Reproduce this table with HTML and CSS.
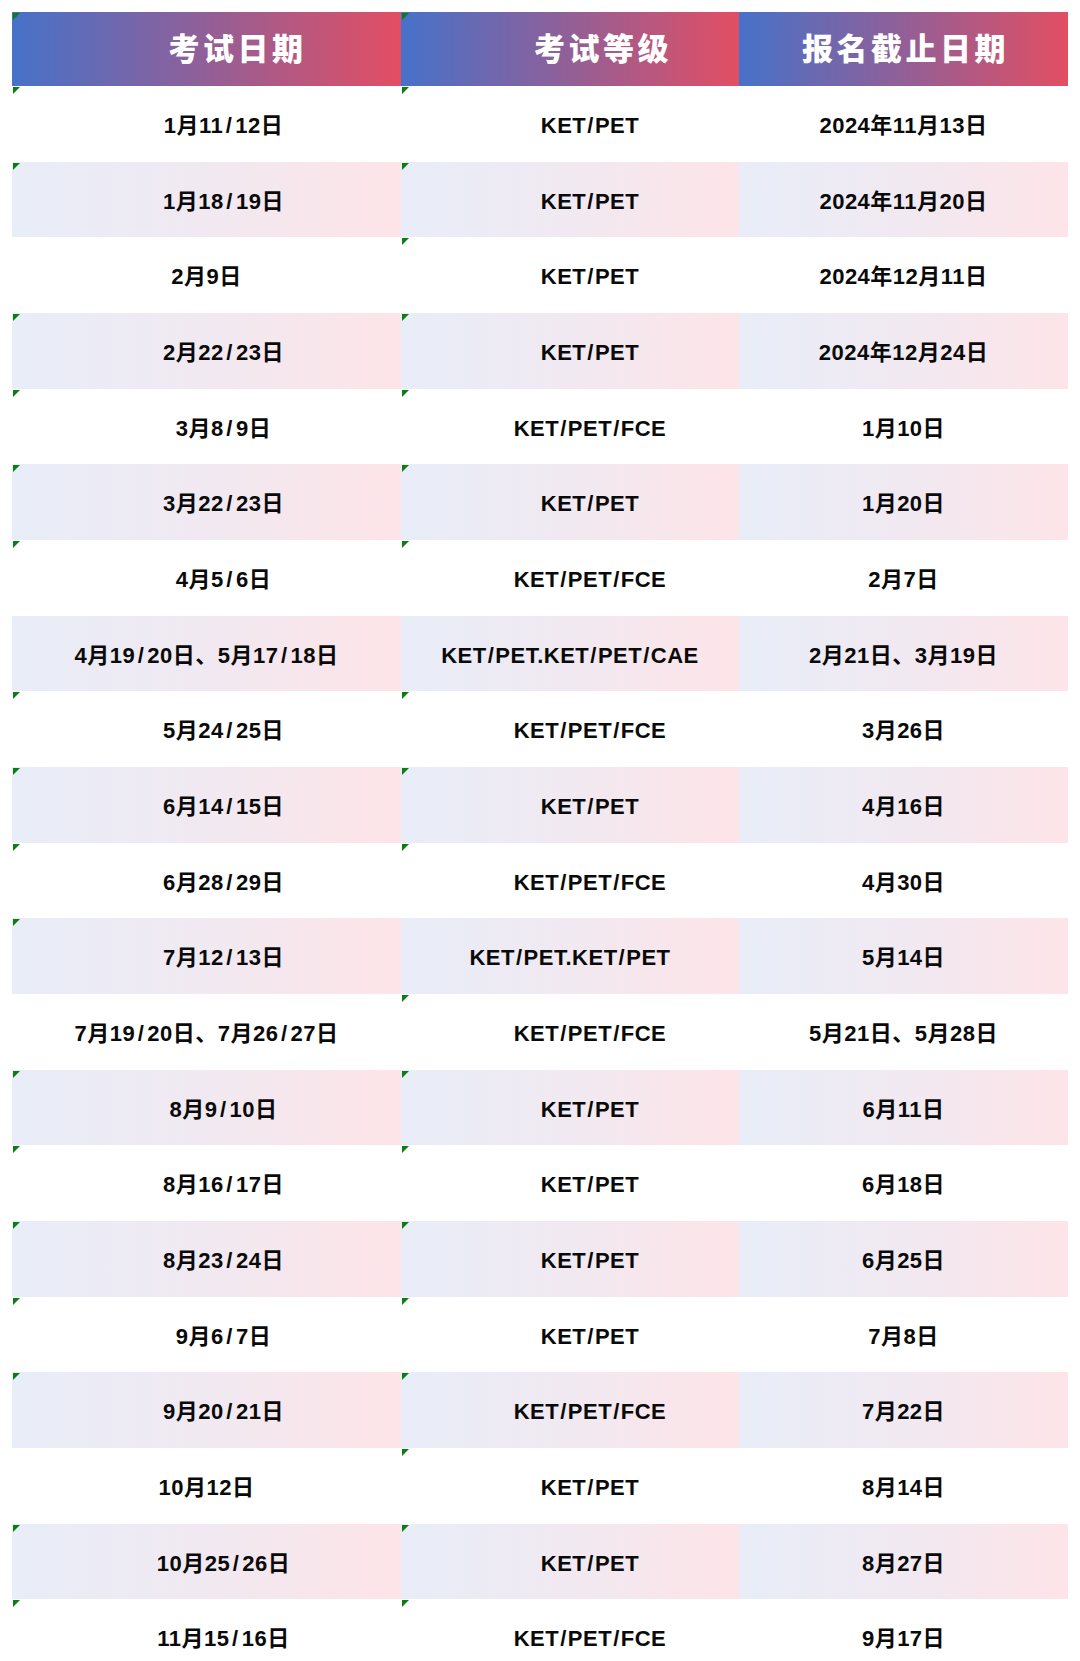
FILE: index.html
```html
<!DOCTYPE html>
<html lang="zh-CN">
<head>
<meta charset="utf-8">
<title>考试日期</title>
<link rel="stylesheet" href="styles.css">
</head>
<body>
<div class="sheet">
  <div class="row head">
    <div class="cell c1 mark">考试日期</div>
    <div class="cell c2 mark">考试等级</div>
    <div class="cell c3">报名截止日期</div>
  </div>
  <div class="row"><div class="cell c1 mark">1月11<span class="s">/</span>12日</div><div class="cell c2 mark">KET<span class="s">/</span>PET</div><div class="cell c3">2024年11月13日</div></div>
  <div class="row alt"><div class="cell c1 mark">1月18<span class="s">/</span>19日</div><div class="cell c2 mark">KET<span class="s">/</span>PET</div><div class="cell c3">2024年11月20日</div></div>
  <div class="row"><div class="cell c1">2月9日</div><div class="cell c2 mark">KET<span class="s">/</span>PET</div><div class="cell c3">2024年12月11日</div></div>
  <div class="row alt"><div class="cell c1 mark">2月22<span class="s">/</span>23日</div><div class="cell c2 mark">KET<span class="s">/</span>PET</div><div class="cell c3">2024年12月24日</div></div>
  <div class="row"><div class="cell c1 mark">3月8<span class="s">/</span>9日</div><div class="cell c2 mark">KET<span class="s">/</span>PET<span class="s">/</span>FCE</div><div class="cell c3">1月10日</div></div>
  <div class="row alt"><div class="cell c1 mark">3月22<span class="s">/</span>23日</div><div class="cell c2 mark">KET<span class="s">/</span>PET</div><div class="cell c3">1月20日</div></div>
  <div class="row"><div class="cell c1 mark">4月5<span class="s">/</span>6日</div><div class="cell c2 mark">KET<span class="s">/</span>PET<span class="s">/</span>FCE</div><div class="cell c3">2月7日</div></div>
  <div class="row alt"><div class="cell c1">4月19<span class="s">/</span>20日、5月17<span class="s">/</span>18日</div><div class="cell c2">KET<span class="s">/</span>PET.KET<span class="s">/</span>PET<span class="s">/</span>CAE</div><div class="cell c3">2月21日、3月19日</div></div>
  <div class="row"><div class="cell c1 mark">5月24<span class="s">/</span>25日</div><div class="cell c2 mark">KET<span class="s">/</span>PET<span class="s">/</span>FCE</div><div class="cell c3">3月26日</div></div>
  <div class="row alt"><div class="cell c1 mark">6月14<span class="s">/</span>15日</div><div class="cell c2 mark">KET<span class="s">/</span>PET</div><div class="cell c3">4月16日</div></div>
  <div class="row"><div class="cell c1 mark">6月28<span class="s">/</span>29日</div><div class="cell c2 mark">KET<span class="s">/</span>PET<span class="s">/</span>FCE</div><div class="cell c3">4月30日</div></div>
  <div class="row alt"><div class="cell c1 mark">7月12<span class="s">/</span>13日</div><div class="cell c2">KET<span class="s">/</span>PET.KET<span class="s">/</span>PET</div><div class="cell c3">5月14日</div></div>
  <div class="row"><div class="cell c1">7月19<span class="s">/</span>20日、7月26<span class="s">/</span>27日</div><div class="cell c2 mark">KET<span class="s">/</span>PET<span class="s">/</span>FCE</div><div class="cell c3">5月21日、5月28日</div></div>
  <div class="row alt"><div class="cell c1 mark">8月9<span class="s">/</span>10日</div><div class="cell c2 mark">KET<span class="s">/</span>PET</div><div class="cell c3">6月11日</div></div>
  <div class="row"><div class="cell c1 mark">8月16<span class="s">/</span>17日</div><div class="cell c2 mark">KET<span class="s">/</span>PET</div><div class="cell c3">6月18日</div></div>
  <div class="row alt"><div class="cell c1 mark">8月23<span class="s">/</span>24日</div><div class="cell c2 mark">KET<span class="s">/</span>PET</div><div class="cell c3">6月25日</div></div>
  <div class="row"><div class="cell c1 mark">9月6<span class="s">/</span>7日</div><div class="cell c2 mark">KET<span class="s">/</span>PET</div><div class="cell c3">7月8日</div></div>
  <div class="row alt"><div class="cell c1 mark">9月20<span class="s">/</span>21日</div><div class="cell c2 mark">KET<span class="s">/</span>PET<span class="s">/</span>FCE</div><div class="cell c3">7月22日</div></div>
  <div class="row"><div class="cell c1">10月12日</div><div class="cell c2 mark">KET<span class="s">/</span>PET</div><div class="cell c3">8月14日</div></div>
  <div class="row alt"><div class="cell c1 mark">10月25<span class="s">/</span>26日</div><div class="cell c2 mark">KET<span class="s">/</span>PET</div><div class="cell c3">8月27日</div></div>
  <div class="row"><div class="cell c1 mark">11月15<span class="s">/</span>16日</div><div class="cell c2 mark">KET<span class="s">/</span>PET<span class="s">/</span>FCE</div><div class="cell c3">9月17日</div></div>
</div>
</body>
</html>
```

FILE: styles.css
```css
html, body {
  margin: 0;
  padding: 0;
  background: #ffffff;
}

.sheet {
  padding: 12px 0 0 12px;
  font-family: "Liberation Sans", Arial, "Noto Sans CJK SC", sans-serif;
  color: #0a0a0a;
}

.row {
  display: grid;
  grid-template-columns: 389px 338px 329px;
  height: 75.68px;
}

.row.head {
  height: 74px;
}

.cell {
  position: relative;
  display: flex;
  align-items: center;
  justify-content: center;
  font-size: 22px;
  line-height: 26px;
  font-weight: 700;
  letter-spacing: 0.5px;
  padding-top: 4px;
  box-sizing: border-box;
  white-space: nowrap;
}

.c1 .s { margin: 0 3px 0 2.5px; }
.c2 .s { margin: 0 1px; }

.row.alt .cell {
  background: linear-gradient(to right, #e8edf8 0%, #f1e9f1 50%, #fde4e8 100%);
}

.c1.mark { padding-left: 34px; }
.c2.mark { padding-left: 40px; }

.head .cell {
  background: linear-gradient(to right, #4672c9 0%, #8a619c 45%, #e34e63 100%);
  color: #ffffff;
  font-family: "Noto Sans CJK SC", sans-serif;
  font-weight: 900;
  font-size: 31px;
  line-height: 40px;
  letter-spacing: 3.5px;
  padding-top: 0;
  padding-bottom: 5px;
  padding-left: 4px;
}

.head .c1.mark { padding-left: 62px; }
.head .c2.mark { padding-left: 66px; }

.mark::before {
  content: "";
  position: absolute;
  left: 1px;
  top: 1px;
  width: 0;
  height: 0;
  border-top: 7px solid #0b7d12;
  border-right: 7px solid transparent;
}
```
